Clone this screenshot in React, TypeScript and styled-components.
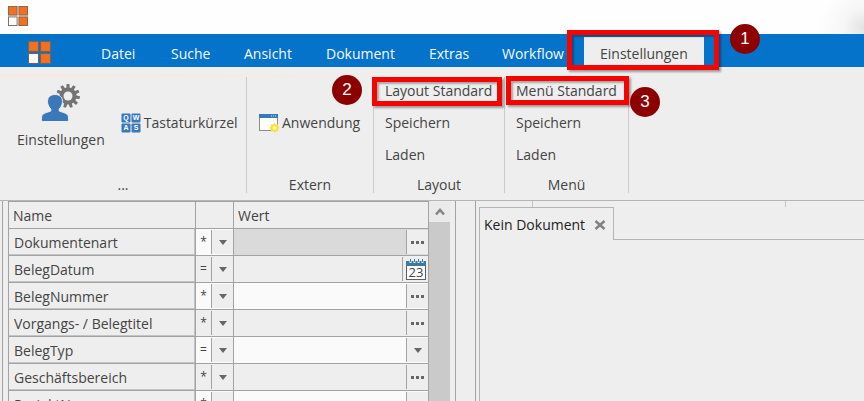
import React from "react";
import styled, { createGlobalStyle } from "styled-components";

const line = "#a3a3a3";
const surface = "#efeeee";
const ink = "#444444";

const GlobalStyle = createGlobalStyle`
  * { box-sizing: border-box; }
  body { margin: 0; background: ${surface}; }
  body, button, input, table {
    font-family: "Open Sans", "Noto Sans", sans-serif;
    font-size: 14px;
    line-height: 20px;
    color: ${ink};
  }
  button { border: 0; padding: 0; background: none; white-space: nowrap; }
`;

const Page = styled.div`
  display: flex;
  flex-direction: column;
  height: 100vh;
  overflow: hidden;
`;

const TitleBar = styled.header`
  display: flex;
  align-items: flex-start;
  height: 34px;
  flex: none;
  padding: 6px 8px;
  background: radial-gradient(circle at 100% 80%, #e4e3e4 0, #f6f6f6 20px, #fefefe 44px);
`;

const MenuBar = styled.nav`
  display: flex;
  height: 33px;
  flex: none;
  padding-left: 28px;
  background: #0573c9;
`;

const AppButton = styled.button`
  display: flex;
  align-items: center;
  padding-top: 4px;
  margin-right: 34px;
`;

const MenuTabs = styled.div`
  display: grid;
  grid-template-columns: 70px 73px 82px 103px 73px 98px 120px;
  padding-top: 3px;
`;

const MenuTab = styled.button<{ $active?: boolean }>`
  position: relative;
  padding: 7px 0 0 16px;
  display: flex;
  align-items: flex-start;
  color: ${(p) => (p.$active ? ink : "#f4f9fd")};
  background: ${(p) => (p.$active ? surface : "transparent")};
`;

const Frame = styled.span<{ $inset: string }>`
  position: absolute;
  inset: ${(p) => p.$inset};
  z-index: 2;
  border: 5px solid #f60400;
  box-shadow: 2px 2px 2px rgba(0, 0, 0, 0.35), inset 2px 2px 2px rgba(0, 0, 0, 0.3);
  pointer-events: none;
`;

const Badge = styled.span<{ $left: number; $top: number }>`
  position: absolute;
  left: ${(p) => p.$left}px;
  top: ${(p) => p.$top}px;
  z-index: 3;
  width: 30px;
  height: 30px;
  border-radius: 50%;
  background: #8c0000;
  color: #fff;
  font: 17px/30px "Liberation Sans", sans-serif;
  text-align: center;
`;

const Ribbon = styled.section`
  display: flex;
  flex: none;
  height: 134px;
  padding: 10px 0 7px;
  border-bottom: 1px solid #b5b5b5;
  background: linear-gradient(90deg, #f8e8df, ${surface}) 0 7px / 50% 3px no-repeat, ${surface};
`;

const Group = styled.div<{ $width: number }>`
  display: flex;
  flex-direction: column;
  width: ${(p) => p.$width}px;
  border-right: 1px solid #cbcbcb;
`;

const GroupBody = styled.div`
  flex: 1;
  display: flex;
  align-items: flex-start;
`;

const GroupLabel = styled.div`
  height: 18px;
  text-align: center;
`;

const BigButton = styled.button`
  display: flex;
  flex-direction: column;
  align-items: center;
  gap: 8px;
  padding: 7px 0 0 17px;
`;

const IconButton = styled.button<{ $indent: number }>`
  display: flex;
  align-items: center;
  gap: 3px;
  padding: 36px 0 0 ${(p) => p.$indent}px;
`;

const CommandList = styled.div`
  flex: 1;
  display: flex;
  flex-direction: column;
  gap: 12px;
  padding: 4px 0 0 11px;
  align-items: stretch;
`;

const Command = styled.button`
  position: relative;
  text-align: left;
`;

const Workspace = styled.main`
  flex: 1;
  display: flex;
  min-height: 0;
`;

const SearchPane = styled.section`
  display: flex;
  flex: none;
  margin-left: 2px;
  padding: 0 5px;
  border: solid ${line};
  border-width: 0 1px;
  overflow: hidden;
`;

const Grid = styled.table`
  table-layout: fixed;
  width: 421px;
  border-collapse: collapse;
  align-self: flex-start;
  th, td { padding: 0; height: 27px; border: 1px solid ${line}; font-weight: 400; text-align: left; }
  th { padding: 2px 0 0 4px; }
`;

const NameCell = styled.td`
  && { padding: 2px 0 0 5px; box-shadow: inset -1px -1px 0 #c4c4c4; }
`;

const Field = styled.div<{ $tone: string }>`
  display: flex;
  height: 26px;
  background: ${(p) => p.$tone};
`;

const TextInput = styled.input<{ $operator?: boolean }>`
  flex: 1;
  min-width: 0;
  width: 16px;
  border: 0;
  padding: 0 ${(p) => (p.$operator ? 0 : 4)}px;
  background: transparent;
  outline: 0;
  font-size: ${(p) => (p.$operator ? 12 : 14)}px;
  text-align: ${(p) => (p.$operator ? "center" : "left")};
`;

const CellButton = styled.button<{ $wide?: boolean }>`
  display: flex;
  align-items: center;
  justify-content: center;
  width: ${(p) => (p.$wide ? 26 : 22)}px;
  margin: 1px 0;
  border-left: 1px solid ${line};
  background: ${surface};
`;

const ScrollBar = styled.div`
  display: flex;
  flex-direction: column;
  width: 21px;
  background: #cacaca;
`;

const ScrollUp = styled.button`
  display: flex;
  align-items: center;
  justify-content: center;
  height: 21px;
  background: #eaeaea;
`;

const DocumentPane = styled.section`
  flex: 1;
  display: flex;
  flex-direction: column;
  min-width: 0;
  margin-left: 19px;
  padding-left: 3px;
  border-left: 1px solid ${line};
`;

const DockStrip = styled.div`
  display: flex;
  flex: none;
  height: 6px;
  padding-left: 53px;
`;

const DockSlot = styled.div`
  width: 254px;
  border: solid #c4c4c4;
  border-width: 0 1px;
`;

const DocumentTabs = styled.div`
  display: flex;
  flex: none;
  height: 33px;
`;

const DocumentTab = styled.div`
  display: flex;
  align-items: center;
  gap: 9px;
  padding: 2px 7px 0 4px;
  border: solid #b5b5b5;
  border-width: 1px 1px 0;
  color: #222;
`;

const TabRest = styled.div`
  flex: 1;
  border-bottom: 1px solid #b5b5b5;
`;

const DocumentBody = styled.div`
  flex: 1;
  border-left: 1px solid #b5b5b5;
`;

const CloseButton = styled.button`
  display: flex;
`;

const Logo = ({ size }: { size: number }) => (
  <svg width={size} height={size} viewBox="0 0 22 22" aria-hidden="true">
    <g fill="#f37021" stroke="#7d6250" strokeWidth="1">
      <rect x="0.5" y="0.5" width="9.5" height="9.5" />
      <rect x="12" y="0.5" width="9.5" height="9.5" />
      <rect x="12" y="12" width="9.5" height="9.5" />
      <rect x="0.5" y="12" width="9.5" height="9.5" fill="#fff" />
    </g>
  </svg>
);

const gearPoints = Array.from({ length: 11 }, (_, i) =>
  [[-0.19, 8.5], [-0.12, 12], [0.12, 12], [0.19, 8.5]].map(([offset, r]) => {
    const a = (i / 11) * Math.PI * 2 - Math.PI / 2 + offset;
    return `${(27 + r * Math.cos(a)).toFixed(2)},${(12 + r * Math.sin(a)).toFixed(2)}`;
  }).join(" "),
).join(" ");

const UserGearIcon = () => (
  <svg width="40" height="38" viewBox="0 0 40 38" aria-hidden="true">
    <polygon points={gearPoints} fill="#737373" />
    <circle cx="27" cy="12" r="4.5" fill={surface} />
    <path
      d="M14 10.5c4.3 0 7.500 2.500 7.500 7 0 3.500-1.700 6-3.300 7.500v2c1.500 1 7.800 1.600 8.800 4.500.5 1.500.8 3.500.3 5.200-.2.7-.8.8-1.500.8H2.200c-.7 0-1.300-.1-1.500-.8-.5-1.700-.2-3.700.3-5.200 1-2.900 7.300-3.500 8.800-4.500v-2C8.200 23.500 6.500 21 6.500 17.500c0-4.500 3.200-7 7.500-7z"
      fill="#3b78b9"
      stroke={surface}
      strokeWidth="1"
    />
  </svg>
);

const KeysIcon = () => (
  <svg width="20" height="20" viewBox="0 0 20 20" aria-hidden="true">
    <g fill="#3b78b9">
      <rect x="0.5" y="0.5" width="9" height="9" rx="1" />
      <rect x="10.5" y="0.5" width="9" height="9" rx="1" />
      <rect x="0.5" y="10.5" width="9" height="9" rx="1" />
      <rect x="10.5" y="10.5" width="9" height="9" rx="1" />
    </g>
    <g fill="#fff" fontFamily="Liberation Sans" fontSize="7" fontWeight="700" textAnchor="middle">
      <text x="5" y="7">Q</text>
      <text x="15" y="7">W</text>
      <text x="5" y="17">A</text>
      <text x="15" y="17">S</text>
    </g>
  </svg>
);

const WindowIcon = () => (
  <svg width="20" height="20" viewBox="0 0 20 20" aria-hidden="true">
    <rect x="0.5" y="1.5" width="18" height="16" fill="#fff" stroke="#8c8c8c" />
    <rect x="0" y="1" width="19" height="4" fill="#3b78b9" />
    <path d="M12 3h1M14 3h1M16 3h1" stroke="#cfe0f0" />
    <path
      d="M15.500 10l1.500 1.500 2-.3.200 2 .8 1.500-.8 1.600-.2 2-2-.1-1.500 1.800-1.500-1.800-2 .1-.2-2-1.300-1.600 1.300-1.500.2-2 2 .3z"
      fill="#f8e23a"
    />
    <circle cx="15.5" cy="15" r="2" fill="#fdf3a0" />
  </svg>
);

const CalendarIcon = () => (
  <svg width="20" height="21" viewBox="0 0 20 21" aria-hidden="true">
    <rect x="0.5" y="4.5" width="19" height="16" fill="#fff" stroke="#606060" />
    <rect x="0" y="2" width="20" height="5" fill="#3b78a8" />
    <path d="M4.500 0v4M8.500 0v4M12.500 0v4M16.500 0v4" stroke="#eef4f8" strokeWidth="2" />
    <path d="M4.500 0v3M8.500 0v3M12.500 0v3M16.500 0v3" stroke="#3b78a8" />
    <text x="10" y="18" fontFamily="Open Sans" fontSize="13" fill="#444" textAnchor="middle">23</text>
  </svg>
);

const ArrowIcon = () => (
  <svg width="8" height="5" viewBox="0 0 8 5" aria-hidden="true">
    <path d="M0 0h8L4 5z" fill="#666" />
  </svg>
);

const DotsIcon = () => (
  <svg width="13" height="3" viewBox="0 0 13 3" aria-hidden="true">
    <path d="M0 0h3v3H0zM5 0h3v3H5zM10 0h3v3h-3z" fill="#666" />
  </svg>
);

const ChevronIcon = () => (
  <svg width="10" height="8" viewBox="0 0 10 8" aria-hidden="true">
    <path d="M1 6.500L5 2l4 4.500" fill="none" stroke="#858585" strokeWidth="2.5" />
  </svg>
);

const CloseIcon = () => (
  <svg width="12" height="10" viewBox="0 0 12 10" aria-hidden="true">
    <path d="M1.500 1l9 8M10.500 1l-9 8" stroke="#828282" strokeWidth="2.5" />
  </svg>
);

const menuItems = ["Datei", "Suche", "Ansicht", "Dokument", "Extras", "Workflow"];

type Row = { name: string; op: string; opTone?: string; tone?: string; kind: "more" | "date" | "list" };
const light = "#fbfafb";
const rows: Row[] = [
  { name: "Dokumentenart", op: "*", opTone: light, tone: "#dadada", kind: "more" },
  { name: "BelegDatum", op: "=", kind: "date" },
  { name: "BelegNummer", op: "*", opTone: light, tone: light, kind: "more" },
  { name: "Vorgangs- / Belegtitel", op: "*", kind: "more" },
  { name: "BelegTyp", op: "=", opTone: light, tone: light, kind: "list" },
  { name: "Geschäftsbereich", op: "*", kind: "more" },
  { name: "ProjektNummer", op: "*", opTone: light, tone: light, kind: "more" },
];

const kindIcon = { more: <DotsIcon />, date: <CalendarIcon />, list: <ArrowIcon /> };
const kindLabel = { more: "auswählen", date: "Kalender", list: "Liste" };

export default function App() {
  return (
    <Page>
      <GlobalStyle />
      <TitleBar>
        <Logo size={20} />
      </TitleBar>
      <MenuBar>
        <AppButton aria-label="Start">
          <Logo size={23} />
        </AppButton>
        <MenuTabs>
          {menuItems.map((item) => (
            <MenuTab key={item}>{item}</MenuTab>
          ))}
          <MenuTab $active>
            Einstellungen
            <Frame $inset="-7px -15px -3px -17px" />
            <Badge $left={146} $top={-13}>1</Badge>
          </MenuTab>
        </MenuTabs>
      </MenuBar>
      <Ribbon>
        <Group $width={247}>
          <GroupBody>
            <BigButton>
              <UserGearIcon />
              Einstellungen
            </BigButton>
            <IconButton $indent={16}>
              <KeysIcon />
              Tastaturkürzel
            </IconButton>
          </GroupBody>
          <GroupLabel>...</GroupLabel>
        </Group>
        <Group $width={127}>
          <GroupBody>
            <IconButton $indent={12}>
              <WindowIcon />
              Anwendung
            </IconButton>
          </GroupBody>
          <GroupLabel>Extern</GroupLabel>
        </Group>
        <Group $width={131}>
          <GroupBody>
            <CommandList>
              <Command>
                Layout Standard
                <Frame $inset="-4px 2px -5px -13px" />
                <Badge $left={-53} $top={-6}>2</Badge>
              </Command>
              <Command>Speichern</Command>
              <Command>Laden</Command>
            </CommandList>
          </GroupBody>
          <GroupLabel>Layout</GroupLabel>
        </Group>
        <Group $width={124}>
          <GroupBody>
            <CommandList>
              <Command>
                Menü Standard
                <Frame $inset="-5px -1px -4px -10px" />
                <Badge $left={114} $top={6}>3</Badge>
              </Command>
              <Command>Speichern</Command>
              <Command>Laden</Command>
            </CommandList>
          </GroupBody>
          <GroupLabel>Menü</GroupLabel>
        </Group>
      </Ribbon>
      <Workspace>
        <SearchPane>
          <Grid>
            <colgroup>
              <col width="187" />
              <col width="38" />
              <col width="195" />
            </colgroup>
            <thead>
              <tr>
                <th scope="col">Name</th>
                <th aria-label="Operator" />
                <th scope="col">Wert</th>
              </tr>
            </thead>
            <tbody>
              {rows.map((row) => (
                <tr key={row.name}>
                  <NameCell>{row.name}</NameCell>
                  <td>
                    <Field $tone={row.opTone ?? surface}>
                      <TextInput $operator defaultValue={row.op} aria-label={`${row.name} Operator`} />
                      <CellButton aria-label={`${row.name} Operator wählen`}>
                        <ArrowIcon />
                      </CellButton>
                    </Field>
                  </td>
                  <td>
                    <Field $tone={row.tone ?? surface}>
                      <TextInput aria-label={row.name} />
                      <CellButton $wide={row.kind === "date"} aria-label={`${row.name} ${kindLabel[row.kind]}`}>
                        {kindIcon[row.kind]}
                      </CellButton>
                    </Field>
                  </td>
                </tr>
              ))}
            </tbody>
          </Grid>
          <ScrollBar>
            <ScrollUp aria-label="Nach oben">
              <ChevronIcon />
            </ScrollUp>
          </ScrollBar>
        </SearchPane>
        <DocumentPane>
          <DockStrip>
            <DockSlot />
          </DockStrip>
          <DocumentTabs>
            <DocumentTab>
              Kein Dokument
              <CloseButton aria-label="Schließen">
                <CloseIcon />
              </CloseButton>
            </DocumentTab>
            <TabRest />
          </DocumentTabs>
          <DocumentBody />
        </DocumentPane>
      </Workspace>
    </Page>
  );
}
